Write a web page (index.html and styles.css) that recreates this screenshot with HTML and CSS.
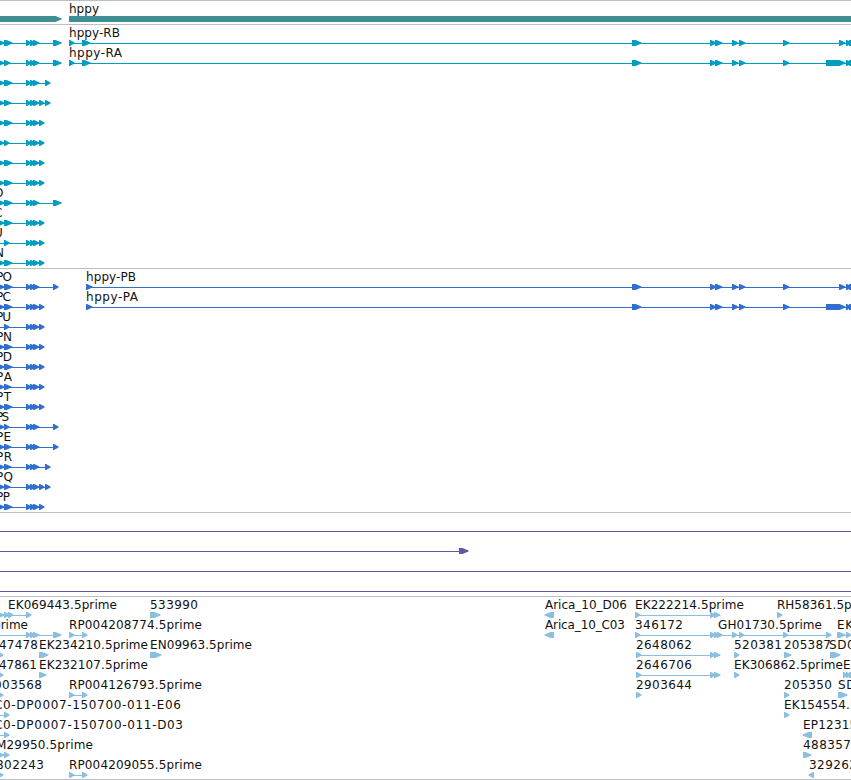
FILE: index.html
```html
<!DOCTYPE html>
<html lang="en">
<head>
    <meta charset="UTF-8">
    <title>hppy</title>
    <link rel="stylesheet" href="styles.css">
</head>
<body>
    <div class="browser">
        <div class="track gene" id="genes"></div>
        <div class="track transcript" id="transcripts"></div>
        <div class="track protein" id="proteins"></div>
        <div class="track span" id="spans"></div>
        <div class="track est" id="ests"></div>
    </div>
    <script src="tracks.js"></script>
</body>
</html>
```
FILE: styles.css
```css
body {
    margin: 0;
    background: #fff;
    overflow: hidden;
}
.browser {
    width: 851px;
    border-bottom: 1px solid #bebebe;
}
.track {
    border-top: 1px solid #bebebe;
    padding: 2px 0 1px;
}
.est {
    padding-bottom: 0;
}
.row {
    display: block;
    width: 851px;
    height: 20px;
    overflow: visible;
}
.row text {
    font-family: "DejaVu Sans", sans-serif;
    font-size: 12px;
    fill: #111;
}
.gene { color: #3f8e94; }
.transcript { color: #009dc0; }
.protein { color: #306fd0; }
.span { color: #6b53a3; }
.est { color: #8abfdf; }
.row polygon, .row rect {
    fill: currentColor;
}
```
FILE: tracks.js
```js
// label: [x, text, width]
// feature: list of [start, end] blocks joined by a line, start > end points left
const start = [[-2, 4]];
const mid = [[26, 31], [30, 35], [33, 39]];
const right = [[632, 641], [710, 716], [715, 722], [732, 738], [739, 745], [783, 789]];
const last = [[846, 851], [849, 856]];

function left(end, tail) {
    return [...start, [4, end], ...mid, ...tail];
}

const a = [39, 44], b = [45, 50], c = [53, 61], d = [53, 58];
const noFirst = tail => [[-20, -10], [4, 9], ...mid, ...tail];

const transcripts = [
    { labels: [[69, "hppy-RB", 51]], features: [left(12, [c]), [[69, 74], [82, 90], ...right, [839, 845], ...last]] },
    { labels: [[69, "hppy-RA", 53]], features: [left(10, [c]), [[69, 74], [82, 90], ...right, [826, 845], ...last]] },
    { features: [left(12, [b])] },
    { features: [left(11, [a, b])] },
    { features: [left(12, [a])] },
    { features: [left(9, [a])] },
    { features: [left(12, [a])] },
    { features: [left(12, [a])] },
    { labels: [[-6, "O", 10]], features: [left(12, [c])] },
    { labels: [[-6, "C", 8]], features: [left(12, [a])] },
    { labels: [[-6, "U", 9]], features: [noFirst([a])] },
    { labels: [[-5, "N", 9]], features: [left(12, [a])] }
];

const proteinLeft = [
    ["PO", 16, left(12, [d])],
    ["PC", 15, left(12, [a])],
    ["PU", 15, noFirst([a])],
    ["PN", 16, left(12, [a])],
    ["PD", 16, left(12, [a])],
    ["PA", 16, left(11, [a])],
    ["PT", 15, left(12, [a])],
    ["PS", 13, left(9, [d])],
    ["PE", 15, left(11, [d])],
    ["PR", 16, left(11, [b])],
    ["PQ", 17, left(10, [a, b])],
    ["PP", 14, left(12, [a])]
];
const proteins = proteinLeft.map(([name, width, blocks]) => ({ labels: [[-4, name, width]], features: [blocks] }));
proteins[0].labels.push([86, "hppy-PB", 50]);
proteins[0].features.push([[86, 92], ...right, [839, 845], ...last]);
proteins[1].labels.push([86, "hppy-PA", 52]);
proteins[1].features.push([[86, 92], ...right, [826, 845], ...last]);

const genes = [
    { labels: [[69, "hppy", 30]], features: [[[-10, 61]], [[69, 870]]] }
];

const spans = [
    { features: [[[-20, -10], [860, 870]]] },
    { features: [[[-20, -10], [459, 468]]] },
    { features: [[[-20, -10], [860, 870]]] },
    { features: [[[-20, -10], [860, 870]]] }
];

const pair = [[69, 74], [82, 87]];
const ests = [
    {
        labels: [[8, "EK069443.5prime", 109], [150, "533990", 48], [545, "Arica_10_D06", 82], [635, "EK222214.5prime", 109], [777, "RH58361.5prime", 102]],
        features: [[[-2, 4], [4, 9], [8, 13], [26, 31]], [[150, 160]], [[554, 545]], [[635, 640], [710, 715], [714, 720]], [[777, 782]]]
    },
    {
        labels: [[-7, "prime", 35], [69, "RP004208774.5prime", 133], [545, "Arica_10_C03", 80], [635, "346172", 48], [718, "GH01730.5prime", 104], [837, "EK", 16]],
        features: [[[-20, -10], ...mid, c], pair, [[554, 545]], [[635, 640], [710, 715], [714, 719], [717, 722], [732, 737], [739, 744], [783, 788], [826, 831]], [[837, 845], [846, 851]]]
    },
    {
        labels: [[-1, "47478", 39], [39, "EK234210.5prime", 109], [150, "EN09963.5prime", 102], [636, "2648062", 56], [734, "520381", 48], [784, "205387", 47], [829, "SD07", 34]],
        features: [[[-2, 3]], [[39, 48]], [[150, 161]], [[636, 641], [710, 715], [714, 720]], [[734, 739]], [[784, 791]], [[830, 840]]]
    },
    {
        labels: [[-1, "47861", 38], [39, "EK232107.5prime", 109], [636, "2646706", 56], [734, "EK306862.5prime", 109], [843, "EK", 16]],
        features: [[[-2, 3]], [[39, 46]], [[636, 641], [710, 715], [714, 720]], [[734, 739]], [[843, 847], [846, 850], [849, 854]]]
    },
    {
        labels: [[-6, "003568", 48], [69, "RP004126793.5prime", 133], [636, "2903644", 56], [784, "205350", 48], [838, "SD0", 26]],
        features: [[[-2, 3]], pair, [[636, 641]], [[784, 789]], [[838, 847]]]
    },
    {
        labels: [[-6, "C0-DP0007-150700-011-E06", 187], [784, "EK154554.5prime", 109]],
        features: [[[-20, -10], [4, 9]], [[784, 789]]]
    },
    {
        labels: [[-6, "C0-DP0007-150700-011-D03", 189], [803, "EP12315.5prime", 102]],
        features: [[[-20, -10], [4, 9]], [[812, 803]]]
    },
    {
        labels: [[-4, "M29950.5prime", 97], [803, "488357", 48]],
        features: [[[-2, 4], [4, 9]], [[803, 811]]]
    },
    {
        labels: [[-4, "802243", 48], [69, "RP004209055.5prime", 133], [809, "329262", 48]],
        features: [[[-2, 3]], pair, [[814, 809]]]
    }
];

// the tip takes up to 6px, short blocks are nearly all tip
function block([from, to]) {
    const dir = from < to ? 1 : -1;
    const end = to + 0.5 * dir;
    const tip = end - Math.min(6, Math.abs(to - from) - 0.5) * dir;
    return `<polygon points="${from},13 ${tip},13 ${end},15.5 ${end},16.5 ${tip},19 ${from},19"/>`;
}

function feature(blocks) {
    const x1 = blocks[0][0], x2 = blocks[blocks.length - 1][1];
    const line = blocks.length > 1 ? `<rect x="${x1}" y="16" width="${x2 - x1}" height="1"/>` : "";
    return line + blocks.map(block).join("");
}

function label([x, text, width]) {
    return `<text x="${x}" y="10" textLength="${width}">${text}</text>`;
}

function drawTrack(id, rows) {
    document.getElementById(id).innerHTML = rows.map(row =>
        `<svg class="row">${row.features.map(feature).join("")}${(row.labels || []).map(label).join("")}</svg>`
    ).join("");
}

drawTrack("genes", genes);
drawTrack("transcripts", transcripts);
drawTrack("proteins", proteins);
drawTrack("spans", spans);
drawTrack("ests", ests);
```
